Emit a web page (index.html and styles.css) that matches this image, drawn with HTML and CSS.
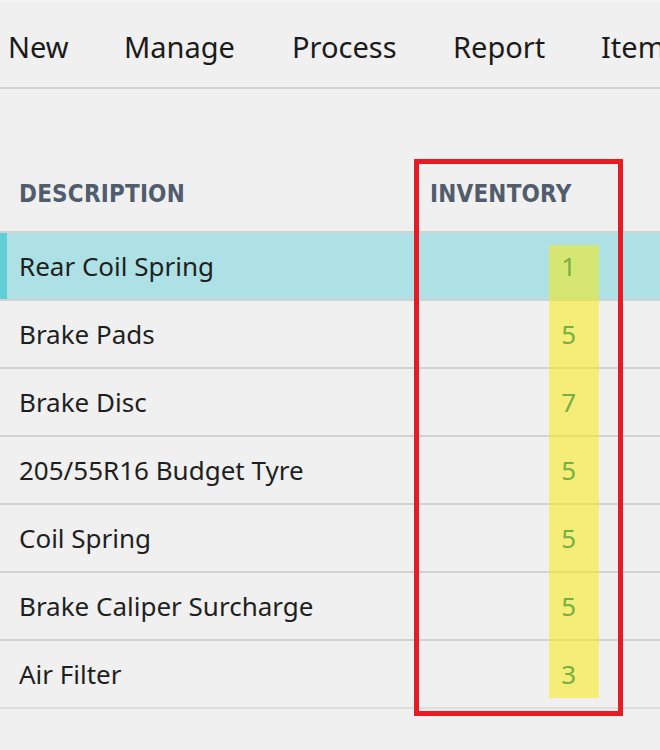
FILE: index.html
```html
<!DOCTYPE html>
<html lang="en">
<head>
<meta charset="utf-8">
<title>Items</title>
<link rel="stylesheet" href="styles.css">
</head>
<body>
<div class="page">
  <nav class="toolbar">
    <span class="tab tab-new">New</span>
    <span class="tab tab-manage">Manage</span>
    <span class="tab tab-process">Process</span>
    <span class="tab tab-report">Report</span>
    <span class="tab">Item</span>
  </nav>
  <section class="list">
    <div class="row head">
      <div class="gutter"></div>
      <div class="cell desc">DESCRIPTION</div>
      <div class="cell inv">INVENTORY</div>
    </div>
    <div class="row selected">
      <div class="gutter"></div>
      <div class="cell desc">Rear Coil Spring</div>
      <div class="cell num">1</div>
    </div>
    <div class="row">
      <div class="gutter"></div>
      <div class="cell desc">Brake Pads</div>
      <div class="cell num">5</div>
    </div>
    <div class="row">
      <div class="gutter"></div>
      <div class="cell desc">Brake Disc</div>
      <div class="cell num">7</div>
    </div>
    <div class="row">
      <div class="gutter"></div>
      <div class="cell desc">205/55R16 Budget Tyre</div>
      <div class="cell num">5</div>
    </div>
    <div class="row">
      <div class="gutter"></div>
      <div class="cell desc">Coil Spring</div>
      <div class="cell num">5</div>
    </div>
    <div class="row">
      <div class="gutter"></div>
      <div class="cell desc">Brake Caliper Surcharge</div>
      <div class="cell num">5</div>
    </div>
    <div class="row last">
      <div class="gutter"></div>
      <div class="cell desc">Air Filter</div>
      <div class="cell num">3</div>
    </div>
  </section>
  <div class="highlight"></div>
  <div class="callout"></div>
</div>
</body>
</html>
```

FILE: styles.css
```css
html, body {
  margin: 0;
  padding: 0;
  background: #f0f0f0;
}
body {
  width: 660px;
  height: 750px;
  overflow: hidden;
  font-family: "Noto Sans", "Open Sans", sans-serif;
  color: #1f1f1f;
}
.page {
  position: relative;
  width: 660px;
  height: 750px;
  border-top: 2px solid #f5f5f5;
  box-sizing: border-box;
}
.toolbar {
  display: flex;
  align-items: center;
  height: 85px;
  padding-left: 8px;
  box-sizing: content-box;
  border-bottom: 2px solid #d3d3d3;
  white-space: nowrap;
  overflow: hidden;
  font-size: 29px;
  color: #1b1b1b;
}
.tab {
  flex: none;
  position: relative;
  top: 2px;
}
.tab-new { width: 116px; }
.tab-manage { width: 168px; }
.tab-process { width: 161px; }
.tab-report { width: 148px; }

.list {
  padding-top: 70px;
}
.row {
  display: grid;
  grid-template-columns: 7px 411px 242px;
  height: 66px;
  border-bottom: 2px solid #d2d2d2;
  align-items: center;
  font-size: 26px;
}
.row.last { border-bottom-color: #dedede; }
.row.head {
  height: 72px;
  font-family: "DejaVu Sans Condensed", "Roboto", sans-serif;
  font-weight: 600;
  font-size: 24px;
  letter-spacing: 0.2px;
  color: #515d6d;
}
.head .cell { position: relative; top: -1px; }
.gutter { height: 100%; }
.cell { padding-left: 12px; }
.cell.num {
  position: relative;
  z-index: 2;
  text-align: right;
  padding-right: 84px;
  color: #76b043;
}
.row.selected { background: #ade1e5; }
.row.selected .gutter { background: #61cfd7; }
.row .gutter { background: #f0f0f0; }
.row.head .gutter { background: transparent; }

.highlight {
  position: absolute;
  z-index: 1;
  left: 549px;
  top: 243px;
  width: 50px;
  height: 453px;
  background: rgba(249, 233, 10, 0.52);
}
.callout {
  position: absolute;
  z-index: 3;
  left: 414px;
  top: 157px;
  width: 209px;
  height: 557px;
  box-sizing: border-box;
  border: 5px solid #e81b24;
}
```
